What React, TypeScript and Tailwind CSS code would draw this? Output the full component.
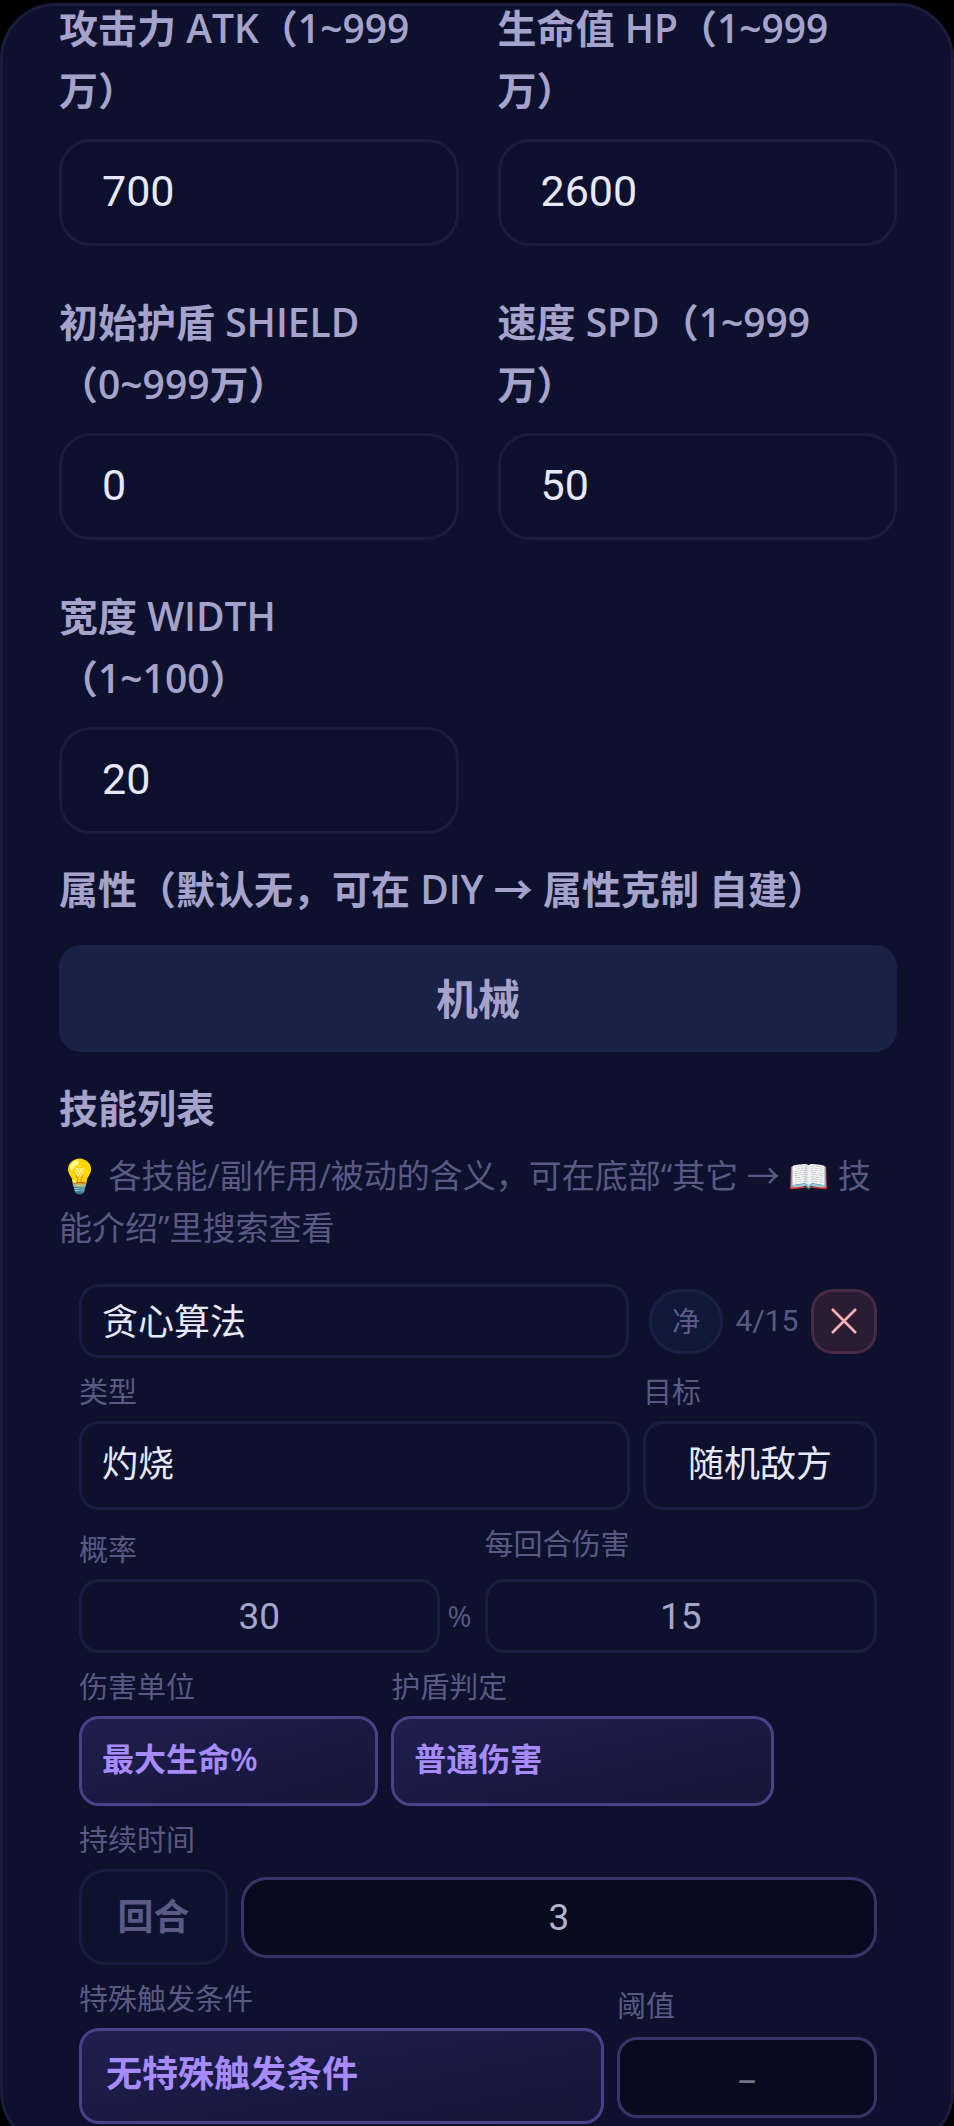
import { useId, useState } from "react";
import type { ReactNode } from "react";

const STATS = [
  { label: "攻击力 ATK（1~999\n万）", value: "700" },
  { label: "生命值 HP（1~999\n万）", value: "2600" },
  { label: "初始护盾 SHIELD\n（0~999万）", value: "0" },
  { label: "速度 SPD（1~999\n万）", value: "50" },
  { label: "宽度 WIDTH\n（1~100）", value: "20" },
];

const sectionLabel = "block text-[39px] leading-[62px] font-semibold text-[#a5a2cb]";
const smallLabel = "block text-[29px] leading-[44px] text-[#5b5984]";
const digits = "font-['Roboto','Noto_Sans_CJK_SC',sans-serif]";
const plainBox = "border-3 border-[#191d40] bg-[#0d112e] rounded-[20px]";
const accentBox =
  "border-3 border-[#474386] bg-linear-to-br from-[#201f4e] to-[#131638] rounded-[20px] pb-1 text-left font-semibold text-[#a78bfa]";
const darkBox =
  "w-full min-w-0 border-3 border-[#38346a] bg-[#080a1e] text-center text-[37px] text-[#b3b3cd] placeholder:text-[#75757f] outline-none";

function StatField({ label, value }: { label: string; value: string }) {
  const id = useId();
  const [text, setText] = useState(value);
  return (
    <div>
      <label htmlFor={id} className={`whitespace-pre-line ${sectionLabel}`}>
        {label}
      </label>
      <input
        id={id}
        inputMode="numeric"
        value={text}
        onChange={(e) => setText(e.target.value)}
        className={`mt-[18px] block h-[107px] w-full rounded-[32px] border-3 border-[#1a1c3e] bg-[#0c102c] px-10 pb-1 text-[43px] text-[#e8e8fb] outline-none ${digits}`}
      />
    </div>
  );
}

function Cell({
  label,
  gap = "gap-[7px]",
  className = "",
  children,
}: {
  label: string;
  gap?: string;
  className?: string;
  children: (id: string) => ReactNode;
}) {
  const id = useId();
  return (
    <div className={`flex min-w-0 flex-col ${gap} ${className}`}>
      <label htmlFor={id} className={smallLabel}>
        {label}
      </label>
      {children(id)}
    </div>
  );
}

function SkillCard() {
  return (
    <div className="mt-[30px] flex flex-col gap-3 px-5">
      <div className="flex items-center">
        <input
          aria-label="技能名称"
          defaultValue="贪心算法"
          className={`h-[74px] min-w-0 flex-1 px-5 pb-1 text-[36px] text-[#e8e8fb] outline-none ${plainBox}`}
        />
        <button className="ml-5 h-[65px] w-[74px] rounded-full border-3 border-[#192044] bg-[#10183a] text-[28px] text-[#5c5b88]">
          净
        </button>
        <span className={`ml-3 w-16 text-center text-[30px] leading-[44px] text-[#5b5984] ${digits}`}>4/15</span>
        <button
          aria-label="删除技能"
          className="ml-3 flex h-[65px] w-[66px] items-center justify-center rounded-[22px] border-3 border-[#462a43] bg-[#291c33] text-[#fcb0b4]"
        >
          <svg viewBox="0 0 26 26" className="size-[26px]" stroke="currentColor" strokeWidth="2.6" fill="none">
            <path d="M1 1 L25 25 M25 1 L1 25" />
          </svg>
        </button>
      </div>

      <div className="grid grid-cols-[1fr_234px] gap-[13px]">
        <Cell label="类型">
          {(id) => (
            <button id={id} className={`h-[89px] px-5 pb-1 text-left text-[36px] text-[#e8e8fb] ${plainBox}`}>
              灼烧
            </button>
          )}
        </Cell>
        <Cell label="目标">
          {(id) => (
            <button id={id} className={`h-[89px] pb-1 text-center text-[36px] text-[#e8e8fb] ${plainBox}`}>
              随机敌方
            </button>
          )}
        </Cell>
      </div>

      <div className="grid grid-cols-2 items-end gap-[13px]">
        <Cell label="概率">
          {(id) => (
            <div className="flex items-center gap-2">
              <input
                id={id}
                inputMode="numeric"
                defaultValue="30"
                className={`h-[74px] min-w-0 flex-1 text-center text-[37px] text-[#a5a5ca] outline-none ${plainBox} ${digits}`}
              />
              <span className="w-6 text-[29px] leading-[44px] text-[#5b5984]">%</span>
            </div>
          )}
        </Cell>
        <Cell label="每回合伤害" gap="gap-[13px]">
          {(id) => (
            <input
              id={id}
              inputMode="numeric"
              defaultValue="15"
              className={`h-[74px] w-full text-center text-[37px] text-[#a5a5ca] outline-none ${plainBox} ${digits}`}
            />
          )}
        </Cell>
      </div>

      <div className="flex gap-[13px]">
        <Cell label="伤害单位" className="w-3/8">
          {(id) => (
            <button id={id} className={`h-[90px] px-5 text-[32px] ${accentBox}`}>
              最大生命%
            </button>
          )}
        </Cell>
        <Cell label="护盾判定" className="w-[48%]">
          {(id) => (
            <button id={id} className={`h-[90px] px-5 text-[32px] ${accentBox}`}>
              普通伤害
            </button>
          )}
        </Cell>
      </div>

      <Cell label="持续时间">
        {(id) => (
          <div className="flex items-center gap-[13px]">
            <button className="h-24 w-[149px] shrink-0 rounded-[26px] border-3 border-[#181d40] bg-[#0d122f] text-[36px] font-semibold text-[#5b5986]">
              回合
            </button>
            <input
              id={id}
              inputMode="numeric"
              defaultValue="3"
              className={`h-[81px] rounded-[26px] ${darkBox} ${digits}`}
            />
          </div>
        )}
      </Cell>

      <div className="grid grid-cols-[1fr_260px] items-center gap-[13px]">
        <Cell label="特殊触发条件">
          {(id) => (
            <button id={id} className={`h-24 px-6 text-[36px] ${accentBox}`}>
              无特殊触发条件
            </button>
          )}
        </Cell>
        <Cell label="阈值" gap="gap-[9px]">
          {(id) => (
            <input id={id} inputMode="numeric" placeholder="–" className={`h-[81px] rounded-[20px] ${darkBox}`} />
          )}
        </Cell>
      </div>
    </div>
  );
}

export default function App() {
  return (
    <div
      lang="zh-CN"
      className="h-screen overflow-hidden bg-black pt-[3px] font-['Open_Sans','Noto_Sans_CJK_SC',sans-serif]"
    >
      <main className="rounded-[56px] border-3 border-[#191c3d] bg-[#0d112d] pr-[54px] pb-[21px] pl-14">
        <form className="-mt-[9px]" onSubmit={(e) => e.preventDefault()}>
          <div className="grid grid-cols-2 gap-x-[39px] gap-y-[45px]">
            {STATS.map((s) => (
              <StatField key={s.label} {...s} />
            ))}
          </div>

          <label htmlFor="attribute" className={`mt-6 ${sectionLabel}`}>
            属性（默认无，可在 DIY → 属性克制 自建）
          </label>
          <button
            id="attribute"
            className="mt-[25px] block h-[107px] w-full rounded-[22px] bg-[#1a2147] text-[42px] font-semibold text-[#a5a2cb]"
          >
            机械
          </button>

          <h2 className={`mt-[25px] ${sectionLabel}`}>技能列表</h2>
          <p className="mt-[11px] text-[33px] leading-[52px] text-[#5b5984]">
            💡 各技能/副作用/被动的含义，可在底部“其它 → 📖 技能介绍”里搜索查看
          </p>

          <SkillCard />
        </form>
      </main>
    </div>
  );
}
